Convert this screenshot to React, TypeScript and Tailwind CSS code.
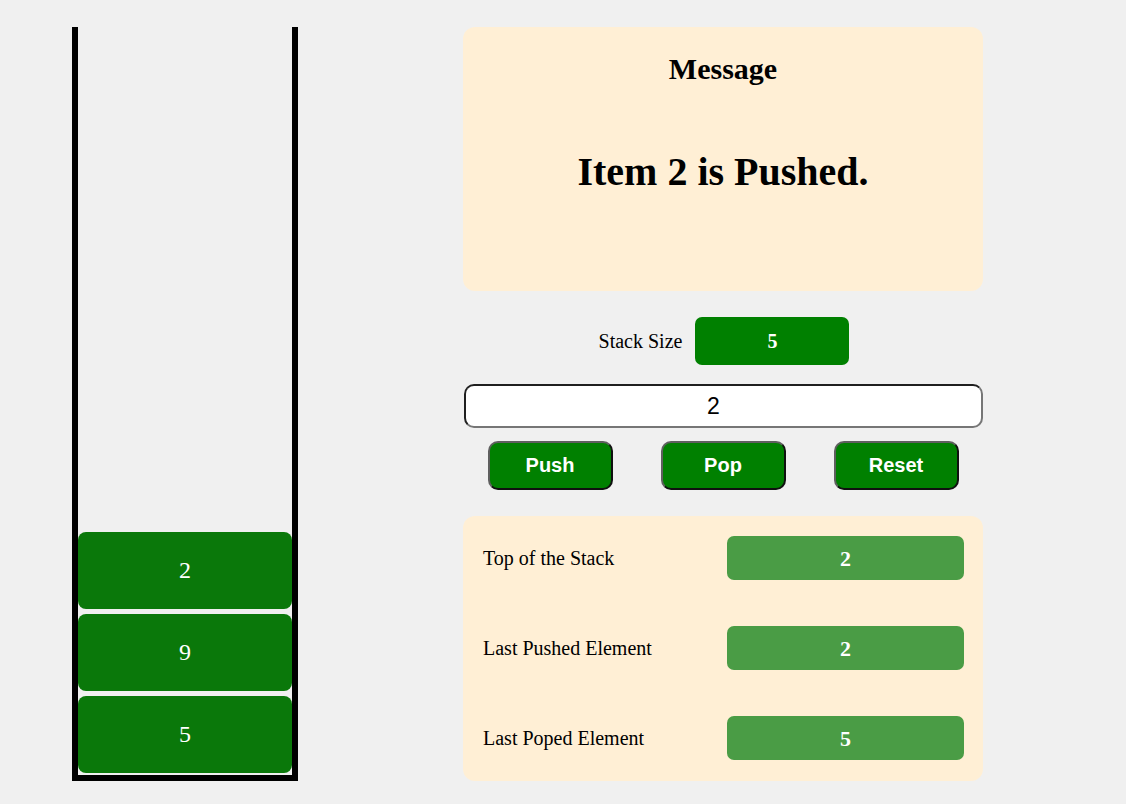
import React from 'react';

const serif = "font-['Liberation_Serif','Times_New_Roman',serif]";
const sans = "font-['Liberation_Sans',Arial,sans-serif]";

const stackItems = [2, 9, 5];

const infoRows = [
  { label: 'Top of the Stack', value: 2 },
  { label: 'Last Pushed Element', value: 2 },
  { label: 'Last Poped Element', value: 5 },
];

const App: React.FC = () => {
  return (
    <div className={`min-h-screen bg-[#f0f0f0] flex items-start pt-[27px] pl-[72px] ${serif}`}>
      {/* Stack column */}
      <div className="w-[226px] h-[754px] border-[6px] border-t-0 border-black flex flex-col justify-end gap-[5px] pb-[2px]">
        {stackItems.map((n, i) => (
          <div
            key={i}
            className="h-[77px] rounded-lg bg-[#0a780a] text-white text-[24px] pb-[2px] flex items-center justify-center"
          >
            {n}
          </div>
        ))}
      </div>

      {/* Controls */}
      <div className="ml-[165px] w-[520px] flex flex-col">
        <div className="h-[264px] rounded-[12px] bg-[#ffefd5] flex flex-col items-center">
          <h2 className="mt-[25px] text-[30px] leading-[34px] font-bold text-black">Message</h2>
          <p className="mt-[61px] text-[40px] leading-[50px] font-bold text-black">Item 2 is Pushed.</p>
        </div>

        <div className="mt-[26px] h-[48px] pl-[2px] flex items-center justify-center gap-[13px]">
          <span className="text-[20px] text-black">Stack Size</span>
          <div className="w-[154px] h-[48px] rounded-[7px] bg-[#008000] text-white font-bold text-[20px] flex items-center justify-center">
            5
          </div>
        </div>

        <input
          readOnly
          value="2"
          className={`mt-[19px] ml-[1px] h-[44px] w-[519px] rounded-[10px] bg-white border-2 border-t-[#1f1f1f] border-l-[#1f1f1f] border-b-[#767676] border-r-[#767676] pr-[20px] text-center text-[23px] text-black outline-none ${sans}`}
        />

        <div className="mt-[13px] flex justify-center gap-[48px]">
          {['Push', 'Pop', 'Reset'].map(b => (
            <button
              key={b}
              className={`w-[125px] h-[49px] rounded-[10px] bg-[#008000] text-white font-bold text-[20px] pb-[2px] border-2 border-t-[#5f5f5f] border-l-[#5f5f5f] border-b-[#101010] border-r-[#101010] ${sans}`}
            >
              {b}
            </button>
          ))}
        </div>

        <div className="mt-[26px] h-[265px] rounded-[12px] bg-[#ffefd5] pl-[20px] pr-[19px] pt-[20px] flex flex-col gap-[46px]">
          {infoRows.map(r => (
            <div key={r.label} className="flex items-center justify-between">
              <span className="text-[20px] text-black">{r.label}</span>
              <div className="w-[237px] h-[44px] rounded-[7px] bg-[#4a9c45] text-white font-bold text-[22px] flex items-center justify-center">
                {r.value}
              </div>
            </div>
          ))}
        </div>
      </div>
    </div>
  );
};

export default App;
